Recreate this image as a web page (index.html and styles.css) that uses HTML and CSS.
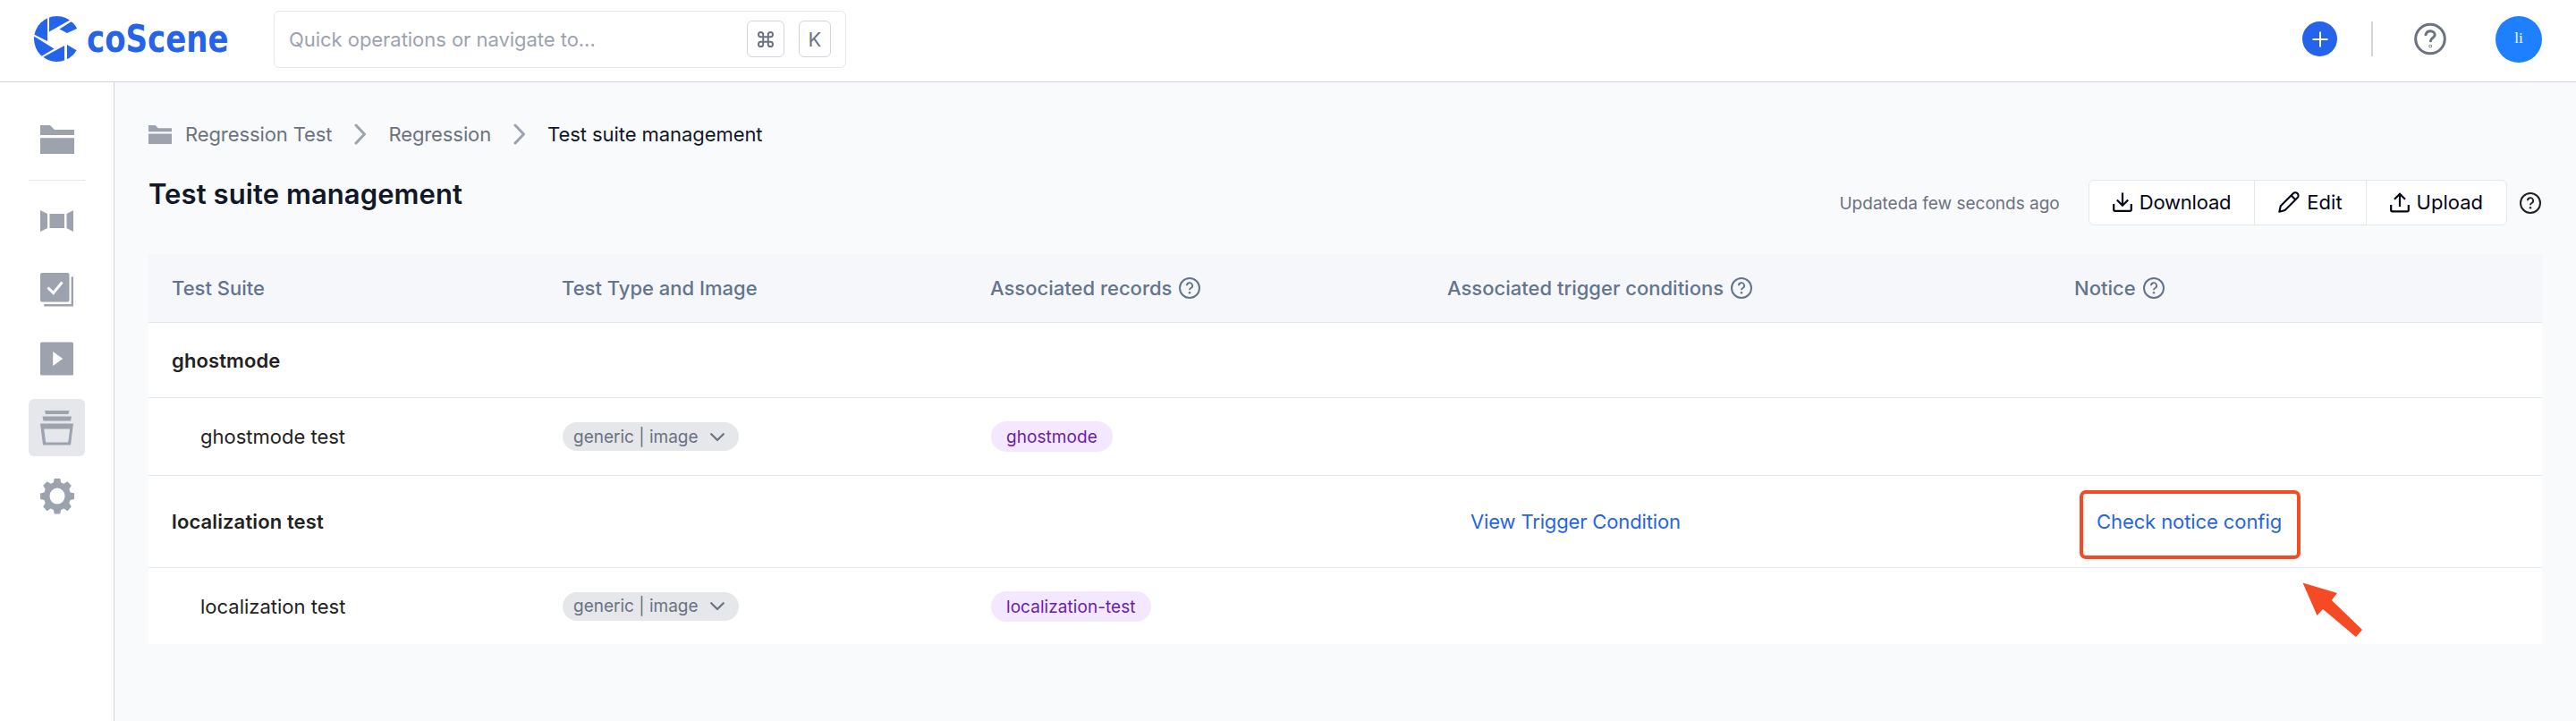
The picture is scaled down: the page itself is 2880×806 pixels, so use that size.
FILE: index.html
```html
<!DOCTYPE html>
<html lang="en">
<head>
<meta charset="utf-8">
<title>Test suite management</title>
<link rel="stylesheet" href="styles.css">
</head>
<body>
<svg class="defs" aria-hidden="true">
  <symbol id="help" viewBox="0 0 24 24">
    <circle cx="12" cy="12" r="11" fill="none" stroke="currentColor" stroke-width="2"/>
    <path d="M8.9 9.3a3.1 3.1 0 1 1 4.6 2.7c-.9.5-1.5 1-1.5 1.9v.4" fill="none" stroke="currentColor" stroke-width="1.9"/>
    <circle cx="12" cy="17.2" r="1.25" fill="currentColor"/>
  </symbol>
  <symbol id="folder" viewBox="0 0 38 32">
    <path d="M0 0h11l5 5h22v6H0zM0 14.3h38V32H0z" fill="currentColor"/>
  </symbol>
  <symbol id="chevron" viewBox="0 0 14 24">
    <path d="M2 2l9.5 10L2 22" fill="none" stroke="currentColor" stroke-width="3" stroke-linecap="round" stroke-linejoin="round"/>
  </symbol>
  <symbol id="down" viewBox="0 0 16 10">
    <path d="M1.2 1.2L8 8l6.800-6.800" fill="none" stroke="currentColor" stroke-width="2.200" stroke-linecap="round" stroke-linejoin="round"/>
  </symbol>
</svg>

<header class="topbar">
  <div class="brand">
    <svg class="brand-mark" viewBox="0 0 48 51">
      <defs><clipPath id="disc"><ellipse cx="25.500" cy="25.500" rx="25.500" ry="25.500"/></clipPath></defs>
      <g clip-path="url(#disc)" fill="#2563eb">
        <path d="M0 0H15V28L0 20.500z"/>
        <path d="M17 0H36L40 4.500L17 17.500z"/>
        <path d="M41.500 6.200L50 10V13L37 19L28.500 14.500z"/>
        <path d="M0 22.500L22.500 36.500L9 44.500L0 51z"/>
        <path d="M10.500 45.800L34 33V51H16z"/>
        <path d="M37 32L48 38.500V51H37z"/>
      </g>
    </svg>
    <span class="brand-name">coScene</span>
  </div>
  <div class="search">
    <span class="search-text">Quick operations or navigate to...</span>
    <kbd class="key key-cmd"><svg width="18" height="18" viewBox="0 0 18 18" fill="none" stroke="currentColor" stroke-width="2"><path d="M6.200 3.600a2.600 2.600 0 1 0-2.600 2.600h10.800a2.600 2.600 0 1 0-2.600-2.600v10.800a2.600 2.600 0 1 0 2.600-2.600H3.600a2.600 2.600 0 1 0 2.600 2.600z"/></svg></kbd>
    <kbd class="key">K</kbd>
  </div>
  <div class="top-actions">
    <span class="add"><svg width="18" height="18" viewBox="0 0 18 18" stroke="#fff" stroke-width="2"><path d="M9 .5v17M.5 9h17"/></svg></span>
    <span class="split"></span>
    <svg class="top-help" viewBox="0 0 36 37" fill="none" stroke="currentColor" stroke-width="3" stroke-linecap="round">
      <circle cx="18" cy="18.500" r="16.300"/>
      <path d="M13 13.800c.8-3 3-4 5.200-4 3 0 5 1.900 5 4.300 0 3.300-4.800 3.400-4.800 6.600"/>
      <circle cx="18.200" cy="26.600" r=".4"/>
    </svg>
    <span class="avatar">li</span>
  </div>
</header>

<div class="body">
  <nav class="sidebar">
    <a class="nav-item nav-project"><svg width="38" height="32"><use href="#folder"/></svg></a>
    <span class="nav-rule"></span>
    <a class="nav-item"><svg width="38" height="24" viewBox="0 0 38 24" fill="currentColor"><path d="M0 0l8 4v16l-8 4zM10.500 4H27v16H10.500zM29.500 4L37 0v24l-7.500-4z"/></svg></a>
    <a class="nav-item"><svg width="38" height="38" viewBox="0 0 38 38"><rect width="32.500" height="32.500" rx="2" fill="currentColor"/><path d="M35.800 4.500V36.300H4.200" fill="none" stroke="currentColor" stroke-width="2.400"/><path d="M8.500 16.500l6.200 6 9.800-12" fill="none" stroke="#fff" stroke-width="3"/></svg></a>
    <a class="nav-item"><svg width="38" height="38" viewBox="0 0 38 38"><rect y=".5" width="37" height="37" rx="1.500" fill="currentColor"/><path d="M14.200 11v16l11-8z" fill="#fff"/></svg></a>
    <a class="nav-item active"><svg width="38" height="40" viewBox="0 0 38 40" fill="currentColor"><path d="M5 1h27.500l-1 4H6zM2.500 7.500h32.500l-1 5H3.500zM0 15.500h37l-3 24H3zM4.200 21.500l2 15h25l2-15z" fill-rule="evenodd"/></svg></a>
    <a class="nav-item"><svg width="38" height="40" viewBox="2 2.200 20 20" preserveAspectRatio="none"><path fill="currentColor" fill-rule="evenodd" d="M10.300 2h3.400l.5 2.400 1.700.7 2.100-1.300 2.300 2.300-1.300 2.100.7 1.700 2.400.5v3.300l-2.400.5-.7 1.700 1.300 2.100-2.300 2.300-2.100-1.300-1.700.7-.5 2.300h-3.400l-.5-2.300-1.700-.7L6 20.300 3.700 18 5 15.900l-.7-1.700-2.300-.5v-3.300l2.300-.5L5 8.200 3.700 6.100 6 3.800l2.100 1.300 1.700-.7zM12 7.500a4.500 4.500 0 1 0 0 9 4.500 4.500 0 0 0 0-9z"/></svg></a>
  </nav>

  <main class="main">
    <div class="crumbs">
      <svg class="crumb-folder" width="26" height="21" viewBox="0 0 38 32" preserveAspectRatio="none"><use href="#folder"/></svg>
      <a class="crumb">Regression Test</a>
      <svg class="crumb-sep" width="14" height="24"><use href="#chevron"/></svg>
      <a class="crumb">Regression</a>
      <svg class="crumb-sep" width="14" height="24"><use href="#chevron"/></svg>
      <span class="crumb current">Test suite management</span>
    </div>

    <div class="title-row">
      <h1 class="title">Test suite management</h1>
      <span class="updated">Updateda few seconds ago</span>
      <div class="buttons">
        <button class="btn"><svg width="22" height="23" viewBox="0 0 22 23" fill="none" stroke="currentColor" stroke-width="2.200"><path d="M1.200 13v6.300a1.500 1.500 0 0 0 1.500 1.500h16.600a1.500 1.500 0 0 0 1.500-1.500V13M11 .5v14M4.800 8.500l6.200 6.200 6.200-6.200"/></svg><span class="wide">Download</span></button>
        <button class="btn"><svg width="24" height="24" viewBox="0 0 24 24" fill="none" stroke="currentColor" stroke-width="2.100" stroke-linejoin="round"><path d="M1.300 22.700l1.500-6.500L16.800 2.300a3.300 3.300 0 0 1 4.800 4.800L7.600 21zM14.600 4.500l4.800 4.800"/></svg><span>Edit</span></button>
        <button class="btn"><svg width="22" height="23" viewBox="0 0 22 23" fill="none" stroke="currentColor" stroke-width="2.200"><path d="M1.200 14v5.800a1.500 1.500 0 0 0 1.500 1.500h16.600a1.500 1.500 0 0 0 1.500-1.500V14M11 16V2M5 7.800l6-6 6 6"/></svg><span>Upload</span></button>
      </div>
      <svg class="help-dark" width="24" height="24"><use href="#help"/></svg>
    </div>

    <div class="table">
      <div class="row head">
        <div class="cell">Test Suite</div>
        <div class="cell">Test Type and Image</div>
        <div class="cell">Associated records<svg width="24" height="24"><use href="#help"/></svg></div>
        <div class="cell">Associated trigger conditions<svg width="24" height="24"><use href="#help"/></svg></div>
        <div class="cell">Notice<svg width="24" height="24"><use href="#help"/></svg></div>
      </div>
      <div class="row group">
        <div class="cell">ghostmode</div>
      </div>
      <div class="row case">
        <div class="cell">ghostmode test</div>
        <div class="cell"><span class="pill">generic | image<svg width="16" height="10"><use href="#down"/></svg></span></div>
        <div class="cell"><span class="tag">ghostmode</span></div>
      </div>
      <div class="row group tall">
        <div class="cell">localization test</div>
        <div class="cell"></div>
        <div class="cell"></div>
        <div class="cell"><a class="link trigger">View Trigger Condition</a></div>
        <div class="cell"><a class="link notice">Check notice config</a>
          <span class="marker"></span>
          <svg class="pointer" width="68" height="62" viewBox="0 0 68 62"><path fill="#f54a24" d="M1.500 1.500L40 13l-6.200 8L68 54l-7 8-37-31-6.500 7z"/></svg>
        </div>
      </div>
      <div class="row case last">
        <div class="cell">localization test</div>
        <div class="cell"><span class="pill">generic | image<svg width="16" height="10"><use href="#down"/></svg></span></div>
        <div class="cell"><span class="tag">localization-test</span></div>
      </div>
    </div>
  </main>
</div>
</body>
</html>
```
FILE: styles.css
```css
* { box-sizing: border-box; }

body {
  margin: 0;
  height: 806px;
  display: flex;
  flex-direction: column;
  background: #f9fafc;
  color: #222;
  font: 400 22px/32px Inter, "Liberation Sans", sans-serif;
  overflow: hidden;
}

svg { flex: none; display: block; }
.defs { position: absolute; width: 0; height: 0; }

/* Top bar */
.topbar {
  height: 92px;
  flex: none;
  display: flex;
  align-items: center;
  padding: 0 38px 4px;
  background: #fff;
  border-bottom: 1px solid #d1d5db;
}
.brand { display: flex; align-items: center; gap: 11px; width: 268px; }
.brand-mark { width: 48px; height: 51px; }
.brand-name {
  color: #2563eb;
  font: 700 42px/50px "DejaVu Sans Condensed", "DejaVu Sans", sans-serif;
  font-stretch: condensed;
  transform: scaleX(.9);
  transform-origin: left center;
}
.search {
  width: 640px;
  height: 64px;
  display: flex;
  align-items: center;
  padding: 0 16px;
  border: 1px solid #e2e8f0;
  border-radius: 6px;
}
.search-text { flex: 1; color: #9ca3af; letter-spacing: -.04px; }
.key {
  width: 36px;
  height: 41px;
  display: flex;
  align-items: center;
  justify-content: center;
  border: 1px solid #d1d5db;
  border-radius: 6px;
  color: #6b7280;
  font: inherit;
}
.key-cmd { width: 42px; margin-right: 16px; }
.top-actions { display: flex; align-items: center; margin-left: auto; }
.add {
  width: 39px;
  height: 39px;
  display: grid;
  place-items: center;
  border-radius: 50%;
  background: #2563eb;
}
.split { width: 2px; height: 39px; margin: 0 46px 0 38px; background: #d1d5db; }
.top-help { width: 36px; height: 37px; margin-right: 55px; color: #6b7280; }
.avatar {
  width: 52px;
  height: 52px;
  border-radius: 50%;
  background: #1e80ff;
  color: #fff;
  text-align: center;
  font: 17px/49px "Liberation Serif", serif;
}

/* Sidebar */
.body { flex: 1; display: flex; min-height: 0; }
.sidebar {
  width: 128px;
  flex: none;
  display: flex;
  flex-direction: column;
  align-items: center;
  gap: 13px;
  padding-top: 32px;
  background: #fff;
  border-right: 1px solid #d1d5db;
  color: #9ca3af;
}
.nav-item {
  width: 63px;
  height: 64px;
  display: grid;
  place-items: center;
  border-radius: 6px;
}
.nav-rule { width: 63px; height: 1px; background: #e2e8f0; }
.active { background: #e5e7eb; }

/* Page */
.main { flex: 1; padding: 46px 38px 0; }
.crumbs { display: flex; align-items: center; height: 24px; color: #6b7280; letter-spacing: -.1px; }
.crumb-folder { margin-right: 15px; color: #9ca3af; }
.crumb-sep { margin: 0 24px 0 25px; color: #9ca3af; }
.current { color: #111827; letter-spacing: -.07px; }
.title-row { display: flex; align-items: center; height: 51px; margin-top: 39px; }
.title {
  align-self: flex-start;
  margin: 0 auto 0 0;
  color: #111827;
  font-size: 31px;
  font-weight: 600;
  line-height: 32px;
  letter-spacing: .08px;
}
.updated { margin-right: 32px; padding-top: 2px; color: #6b7280; font-size: 19px; }
.buttons {
  display: flex;
  height: 51px;
  margin-right: 14px;
  border: 1px solid #e2e8f0;
  border-radius: 6px;
  background: #fff;
}
.btn {
  display: flex;
  align-items: center;
  gap: 8px;
  padding: 0 26px 1px;
  border: 0;
  background: none;
  color: #020617;
  font: inherit;
}
.btn + .btn { border-left: 1px solid #e2e8f0; }
.wide { letter-spacing: -.2px; }
.help-dark { color: #222; margin-right: 1px; }

/* Table */
.table { margin-top: 32px; background: #fff; }
.row {
  display: grid;
  grid-template-columns: 437px 479px 511px 701px 1fr;
  height: 87px;
  border-bottom: 1px solid #e2e8f0;
}
.cell { position: relative; display: flex; align-items: center; padding-left: 26px; }
.head { height: 77px; background: #f5f7fb; color: #64748b; font-weight: 500; }
.head .cell { padding-left: 25px; }
.head .cell:first-child { padding-left: 26px; }
.head svg { margin-left: 8px; }
.group { height: 84px; }
.group .cell:first-child { font-weight: 600; letter-spacing: .12px; }
.case .cell:first-child { padding-left: 58px; }
.tall { height: 103px; }
.last { height: 85px; border-bottom: 0; }
.pill {
  display: flex;
  align-items: center;
  gap: 13px;
  height: 32px;
  padding: 1px 16px 0 12px;
  border-radius: 16px;
  background: #e5e7eb;
  color: #6b7280;
  font-size: 19px;
}
.tag {
  height: 34px;
  padding: 0 17px;
  border-radius: 17px;
  background: #f3e8ff;
  color: #6b21a8;
  font-size: 19px;
  line-height: 35px;
  letter-spacing: .06px;
}
.link { padding-left: 25px; color: #2563eb; }
.trigger { letter-spacing: -.15px; }
.notice { padding-left: 24px; letter-spacing: -.09px; }

/* Annotation laid over the notice cell */
.marker {
  position: absolute;
  left: 31px;
  top: 16px;
  width: 247px;
  height: 77px;
  border: 4px solid #f54a24;
  border-radius: 7px;
}
.pointer { position: absolute; left: 279px; top: 118px; z-index: 1; }
```
